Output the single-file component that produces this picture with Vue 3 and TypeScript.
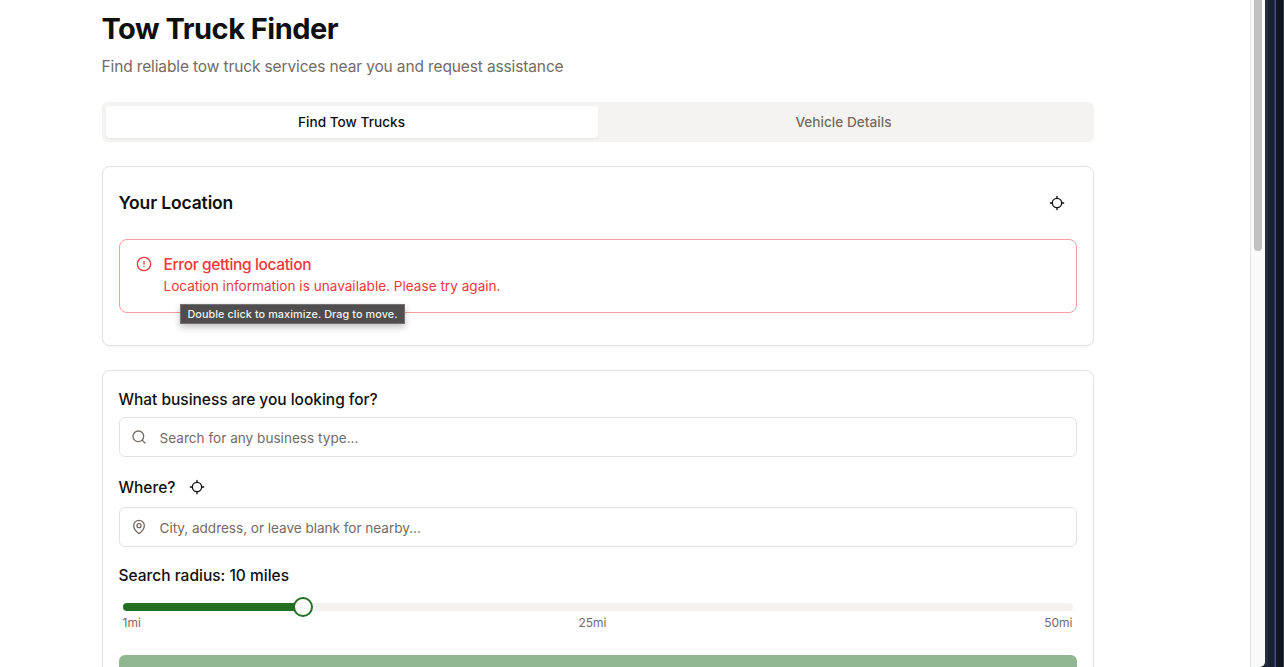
<script setup lang="ts">
import { computed, ref } from 'vue'

type TabId = 'find' | 'vehicle'

const tabs: { id: TabId; label: string }[] = [
  { id: 'find', label: 'Find Tow Trucks' },
  { id: 'vehicle', label: 'Vehicle Details' },
]
const activeTab = ref<TabId>('find')
const business = ref('')
const place = ref('')
const radius = ref(10)
const minRadius = 1
const maxRadius = 50

const share = computed(() => (radius.value - minRadius) / (maxRadius - minRadius))
// The thumb is 20px wide and stays inside the ends of the track.
const thumbCenter = computed(() => `calc(${share.value * 100}% + ${(0.5 - share.value) * 20 - 1}px)`)
</script>

<template>
  <div class="screen">
    <main class="page">
      <div class="container">
        <h1 class="title">Tow Truck Finder</h1>
        <p class="subtitle">Find reliable tow truck services near you and request assistance</p>

        <div class="tabs" role="tablist">
          <button
            v-for="tab in tabs"
            :key="tab.id"
            class="tab"
            :class="{ active: activeTab === tab.id }"
            role="tab"
            @click="activeTab = tab.id"
          >
            {{ tab.label }}
          </button>
        </div>

        <section class="card location">
          <div class="card-head">
            <h2 class="heading">Your Location</h2>
            <button class="icon-button" aria-label="Locate me">
              <svg class="icon" viewBox="0 0 24 24">
                <path d="M2 12h3M19 12h3M12 2v3M12 19v3" />
                <circle cx="12" cy="12" r="7" />
              </svg>
            </button>
          </div>
          <div class="alert" role="alert">
            <svg class="icon" viewBox="0 0 24 24">
              <circle cx="12" cy="12" r="10" />
              <path d="M12 8v4M12 16h.01" />
            </svg>
            <div class="alert-text">
              <h5 class="alert-title">Error getting location</h5>
              <p class="alert-desc">Location information is unavailable. Please try again.</p>
            </div>
            <div class="tooltip">Double click to maximize. Drag to move.</div>
          </div>
        </section>

        <section class="card search">
          <label class="label business-label" for="business">What business are you looking for?</label>
          <div class="field">
            <svg class="icon" viewBox="0 0 24 24">
              <circle cx="11" cy="11" r="8" />
              <path d="m21 21-4.3-4.3" />
            </svg>
            <input id="business" v-model="business" class="input" placeholder="Search for any business type..." />
          </div>
          <div class="where">
            <label class="label where-label" for="place">Where?</label>
            <svg class="icon" viewBox="0 0 24 24">
              <path d="M2 12h3M19 12h3M12 2v3M12 19v3" />
              <circle cx="12" cy="12" r="7" />
            </svg>
          </div>
          <div class="field">
            <svg class="icon" viewBox="0 0 24 24">
              <path d="M20 10c0 6-8 12-8 12s-8-6-8-12a8 8 0 0 1 16 0Z" />
              <circle cx="12" cy="10" r="3" />
            </svg>
            <input id="place" v-model="place" class="input place" placeholder="City, address, or leave blank for nearby..." />
          </div>
          <div class="label radius-label">Search radius: {{ radius }} miles</div>
          <div class="slider">
            <div class="track"><div class="range" :style="{ width: thumbCenter }"></div></div>
            <div class="thumb" :style="{ left: thumbCenter }"></div>
          </div>
          <div class="scale"><span>{{ minRadius }}mi</span><span>25mi</span><span>{{ maxRadius }}mi</span></div>
          <button class="submit" aria-label="Search" disabled></button>
        </section>
      </div>
    </main>
    <div class="gutter">
      <div class="scrollbar"><div class="scroll-thumb"></div></div>
    </div>
    <div class="desktop">
      <i class="edge"></i><i class="band"></i><i class="glow"></i><i class="line"></i><i class="deep"></i><i class="rim"></i>
    </div>
  </div>
</template>

<style>
body {
  margin: 0;
  overflow: hidden;
}
</style>

<style scoped>
* {
  box-sizing: border-box;
}
.screen {
  display: flex;
  width: 100%;
  height: 667px;
  overflow: hidden;
  background: #fff;
  color: #0f0f0e;
  font-family: Inter, "Liberation Sans", sans-serif;
}
h1, h2, h5, p {
  margin: 0;
}
button {
  font: inherit;
  color: inherit;
  border: 0;
  padding: 0;
  background: none;
}
.page {
  flex: 1;
  min-width: 0;
  padding: 11px 0 0 102px;
}
.container {
  width: 992px;
}
.title {
  font-size: 29px;
  line-height: 36px;
  font-weight: 700;
  letter-spacing: -0.5px;
  text-indent: -0.5px;
}
.subtitle {
  margin-top: 7px;
  padding-top: 2px;
  font-size: 15.5px;
  line-height: 22px;
  color: #746b65;
  letter-spacing: -0.13px;
  text-indent: -0.5px;
}
.tabs {
  display: grid;
  grid-template-columns: 1fr 1fr;
  height: 40px;
  margin-top: 24px;
  padding: 4px;
  border-radius: 6px;
  background: #f4f3f1;
}
.tab {
  padding: 0 1px 1px 0;
  border-radius: 4px;
  font-size: 13.6px;
  line-height: 20px;
  font-weight: 500;
  letter-spacing: 0.03px;
  color: #746b65;
}
.tab.active {
  background: #fff;
  color: #0f0f0e;
  box-shadow: 0 1px 2px rgba(0, 0, 0, 0.06);
}
.card {
  border: 1px solid #e2e1e3;
  border-radius: 8px;
  background: #fff;
  box-shadow: 0 1px 2px rgba(0, 0, 0, 0.05);
  padding: 16px;
  margin-top: 24px;
}
.location {
  height: 180px;
}
.card-head {
  display: flex;
  align-items: center;
  justify-content: space-between;
  height: 40px;
  padding-right: 12px;
}
.heading {
  font-size: 17.5px;
  line-height: 28px;
  font-weight: 600;
  letter-spacing: -0.15px;
  text-indent: -0.5px;
}
.icon-button {
  display: flex;
}
.icon {
  flex: none;
  width: 16px;
  height: 16px;
  fill: none;
  stroke: currentColor;
  stroke-width: 2;
  stroke-linecap: round;
  stroke-linejoin: round;
}
.alert {
  position: relative;
  display: flex;
  gap: 12px;
  height: 74px;
  margin-top: 16px;
  padding: 16px;
  border: 1px solid #f69c9c;
  border-radius: 8px;
  color: #ef3838;
}
.alert-title {
  padding-top: 2px;
  font-size: 15.5px;
  line-height: 14px;
  font-weight: 500;
  letter-spacing: -0.36px;
  text-indent: -0.5px;
}
.alert-desc {
  margin-top: 4px;
  font-size: 13.6px;
  line-height: 20px;
  text-indent: -0.5px;
}
.tooltip {
  position: absolute;
  left: 60px;
  top: 64px;
  width: 225px;
  height: 20px;
  padding-top: 2px;
  border: 1px solid #737172;
  background: #4f4d4e;
  color: #f2f2f2;
  box-shadow: 0 3px 7px rgba(0, 0, 0, 0.25);
  font-size: 10.8px;
  line-height: 16px;
  font-weight: 500;
  letter-spacing: 0.1px;
  text-align: center;
  white-space: nowrap;
}
.search {
  height: 340px;
}
.label {
  display: block;
  padding-top: 2px;
  font-size: 15.5px;
  line-height: 22px;
  font-weight: 500;
  text-indent: -0.5px;
}
.field {
  display: flex;
  align-items: center;
  gap: 12px;
  height: 40px;
  padding-left: 11px;
  border: 1px solid #e2e1e3;
  border-radius: 6px;
  color: #746b65;
}
.business-label {
  margin-bottom: 6px;
  letter-spacing: -0.02px;
}
.input {
  flex: 1;
  border: 0;
  outline: 0;
  padding: 2px 0 0 0.5px;
  background: none;
  font: 13.6px/20px Inter, "Liberation Sans", sans-serif;
}
.input::placeholder {
  color: #746b65;
  opacity: 1;
}
.input.place {
  letter-spacing: -0.04px;
}
.where {
  display: flex;
  align-items: center;
  height: 24px;
  margin: 18px 0 8px;
}
.where-label {
  width: 70px;
}
.radius-label {
  margin-top: 16px;
}
.slider {
  position: relative;
  height: 20px;
  margin: 10px 4px 0;
}
.track {
  position: relative;
  top: 6px;
  height: 8px;
  overflow: hidden;
  border-radius: 4px;
  background: #f4f3f1;
}
.range {
  height: 8px;
  background: #237023;
}
.thumb {
  position: absolute;
  top: 0;
  width: 20px;
  height: 20px;
  margin-left: -10px;
  border: 2px solid #237023;
  border-radius: 50%;
  background: #fff;
}
.scale {
  display: flex;
  justify-content: space-between;
  margin: -2px 4.5px 0 3.5px;
  font-size: 12px;
  line-height: 16px;
  color: #746b65;
}
.submit {
  display: block;
  width: 100%;
  height: 44px;
  margin-top: 24px;
  border-radius: 6px;
  background: #91b791;
}
.gutter {
  display: flex;
  flex: none;
  background: #151b2a;
}
.scrollbar {
  width: 15px;
  padding-left: 3px;
  border-left: 1px solid #e5e5e5;
  border-bottom-right-radius: 5px;
  background: #fafafa;
}
.scroll-thumb {
  width: 8px;
  height: 251px;
  border-radius: 0 0 4px 4px;
  background: #c1c1c1;
}
.desktop {
  display: grid;
  flex: none;
  grid-template-columns: 3px 6px 1px 1px 7px 1px;
  width: 19px;
}
.edge {
  background: #252d3f;
}
.band {
  background: #192130;
}
.glow {
  background: #2f2d70;
}
.line {
  background: #5346be;
}
.deep {
  background: #0f1524;
}
.rim {
  background: #393e43;
}
</style>
